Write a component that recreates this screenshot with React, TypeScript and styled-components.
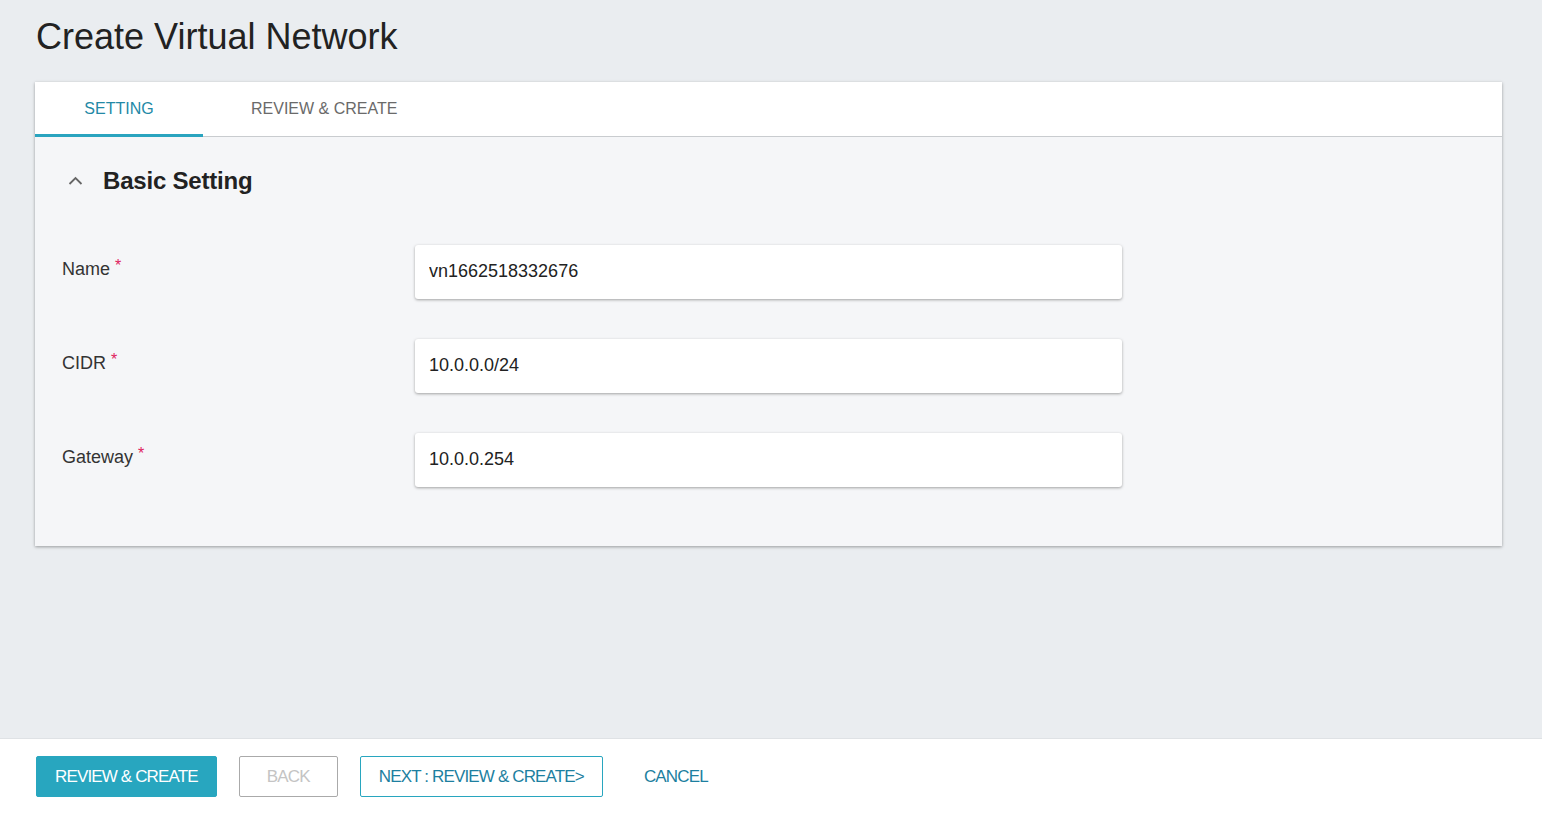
import React from 'react'
import styled, { createGlobalStyle } from 'styled-components'

const GlobalStyle = createGlobalStyle`
  html, body {
    margin: 0;
    padding: 0;
    background: #eaedf0;
    font-family: 'Liberation Sans', Arial, sans-serif;
  }
  * {
    box-sizing: border-box;
  }
`

const Page = styled.div`
  display: flex;
  flex-direction: column;
  min-height: 100vh;
`

const Content = styled.main`
  flex: 1;
  padding: 16px 40px 40px 35px;
`

const Title = styled.h1`
  margin: 0 0 25px 1px;
  font-size: 36px;
  font-weight: 400;
  line-height: 41px;
  color: #222;
`

const Card = styled.section`
  box-shadow: 0 1px 3px rgba(0, 0, 0, 0.35);
`

const TabBar = styled.div`
  display: flex;
  height: 55px;
  background: #fff;
  border-bottom: 1px solid #c9cccf;
`

const Tab = styled.div<{ $active?: boolean }>`
  display: flex;
  align-items: center;
  justify-content: center;
  padding: 2px 48px 0;
  min-width: 168px;
  margin-bottom: -1px;
  font-size: 16px;
  color: ${({ $active }) => ($active ? '#2389a6' : '#6a6a6a')};
  border-bottom: 3px solid ${({ $active }) => ($active ? '#2aa4bf' : 'transparent')};
`

const Panel = styled.div`
  background: #f5f6f8;
  padding: 24px 27px 59px;
`

const SectionHeader = styled.div`
  display: flex;
  align-items: center;
  height: 40px;
  margin-bottom: 44px;
`

const Chevron = styled.svg`
  width: 15px;
  height: 15px;
  margin: -2px 20px 0 6px;
`

const SectionTitle = styled.h2`
  margin: 0;
  font-size: 24px;
  font-weight: 700;
  color: #222;
  letter-spacing: -0.2px;
`

const Form = styled.div`
  display: flex;
  flex-direction: column;
  gap: 40px;
`

const Row = styled.div`
  display: grid;
  grid-template-columns: 353px 707px;
  align-items: center;
`

const Label = styled.label`
  font-size: 18px;
  color: #333;
  margin-top: -5px;
`

const Required = styled.span`
  color: #e0245e;
  font-size: 16px;
  margin-left: 5px;
  position: relative;
  top: -4px;
`

const Input = styled.input`
  height: 54px;
  width: 100%;
  border: none;
  border-radius: 3px;
  background: #fff;
  box-shadow: 0 1px 3px rgba(0, 0, 0, 0.35);
  padding: 0 14px 2px;
  font-family: 'Liberation Sans', Arial, sans-serif;
  font-size: 18px;
  color: #222;
  outline: none;
`

const Footer = styled.footer`
  display: flex;
  align-items: flex-start;
  gap: 22px;
  height: 77px;
  padding: 17px 36px 0;
  background: #fff;
  border-top: 1px solid #dfe2e5;
`

const Button = styled.button<{ $variant: 'primary' | 'outline' | 'disabled' | 'text' }>`
  height: 41px;
  min-width: 99px;
  padding: 0 18px;
  font-family: 'Liberation Sans', Arial, sans-serif;
  font-size: 17px;
  letter-spacing: -0.85px;
  border-radius: 2px;
  cursor: pointer;
  background: ${({ $variant }) => ($variant === 'primary' ? '#28a6bf' : '#fff')};
  color: ${({ $variant }) =>
    $variant === 'primary' ? '#fff' : $variant === 'disabled' ? '#c4c4c4' : '#1d7fa0'};
  border: 1px solid
    ${({ $variant }) =>
      $variant === 'primary' || $variant === 'outline'
        ? '#28a6bf'
        : $variant === 'disabled'
          ? '#aaaaaa'
          : 'transparent'};
`

const fields = [
  { label: 'Name', value: 'vn1662518332676' },
  { label: 'CIDR', value: '10.0.0.0/24' },
  { label: 'Gateway', value: '10.0.0.254' },
]

const App = () => {
  return (
    <Page>
      <GlobalStyle />
      <Content>
        <Title>Create Virtual Network</Title>
        <Card>
          <TabBar>
            <Tab $active>SETTING</Tab>
            <Tab>REVIEW &amp; CREATE</Tab>
          </TabBar>
          <Panel>
            <SectionHeader>
              <Chevron viewBox="0 0 15 15">
                <polyline points="1.5,11 7.5,5 13.5,11" fill="none" stroke="#666" strokeWidth="1.8" />
              </Chevron>
              <SectionTitle>Basic Setting</SectionTitle>
            </SectionHeader>
            <Form>
              {fields.map((f) => (
                <Row key={f.label}>
                  <Label>
                    {f.label}
                    <Required>*</Required>
                  </Label>
                  <Input defaultValue={f.value} />
                </Row>
              ))}
            </Form>
          </Panel>
        </Card>
      </Content>
      <Footer>
        <Button $variant="primary">REVIEW &amp; CREATE</Button>
        <Button $variant="disabled">BACK</Button>
        <Button $variant="outline">NEXT : REVIEW &amp; CREATE&gt;</Button>
        <Button $variant="text">CANCEL</Button>
      </Footer>
    </Page>
  )
}

export default App
